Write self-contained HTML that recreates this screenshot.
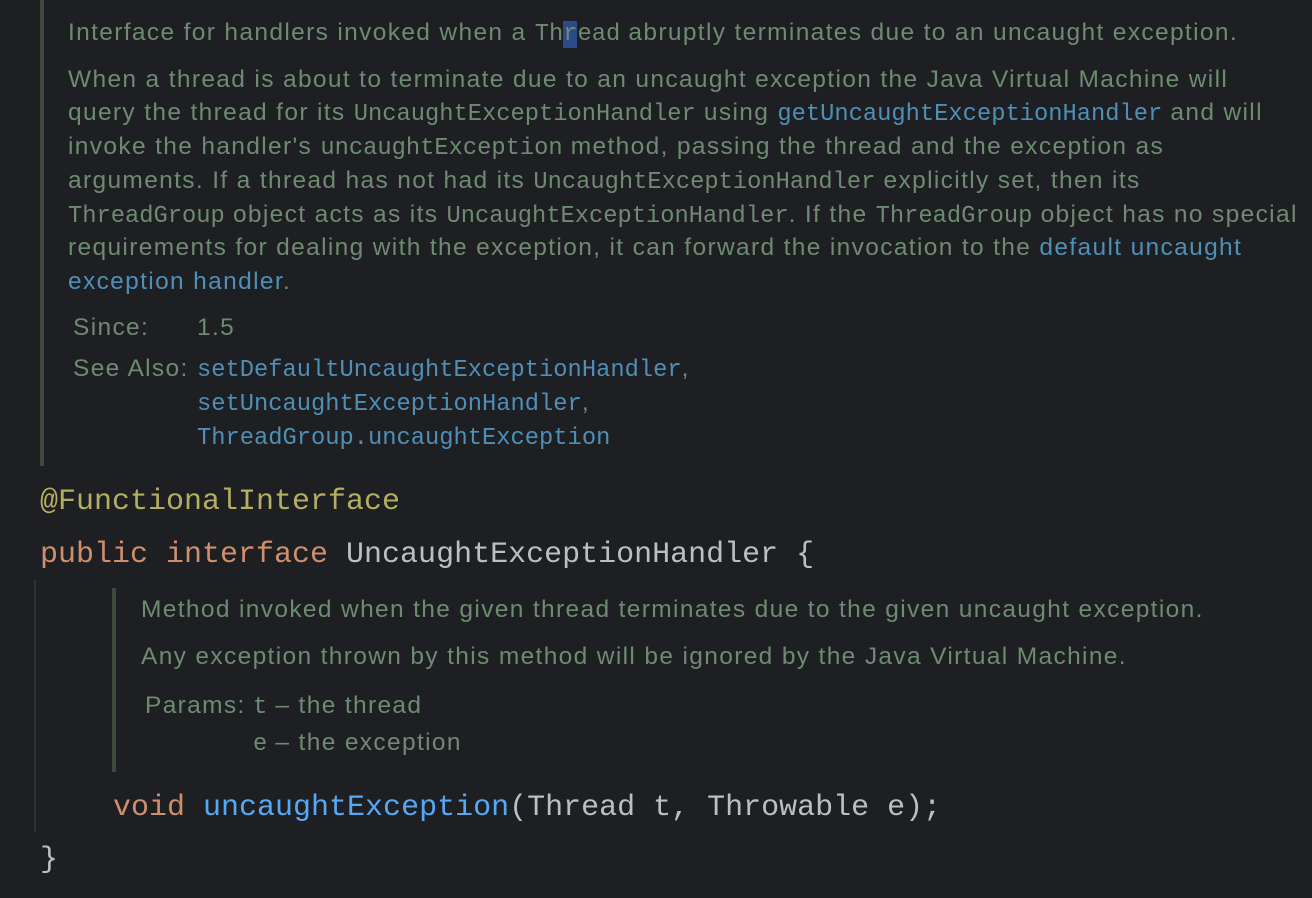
<!DOCTYPE html>
<html><head><meta charset="utf-8"><style>
html,body{margin:0;padding:0;background:#1e1f22;width:1312px;height:898px;overflow:hidden;position:relative}
.d{position:absolute;font-family:"Liberation Sans",sans-serif;font-size:24.5px;letter-spacing:1.35px;color:#6f8a72;line-height:34px;white-space:nowrap}
.m{font-family:"Liberation Mono",monospace;font-size:23.75px;letter-spacing:0}
.l{color:#4f8fb6}
.c{position:absolute;font-family:"Liberation Mono",monospace;font-size:30px;line-height:40px;white-space:nowrap;color:#bcbec4}
.k{color:#cf8e6d}.a{color:#b3ae60}.f{color:#56a8f5}
.bar{position:absolute;background:#3b4a3d;width:4px}
</style></head><body>
<div class="bar" style="left:40px;top:0;height:466px"></div>
<div class="d" style="left:68px;top:16px">Interface for handlers invoked when a <span class="m">Th<span style="background:#2c4a8a">r</span>ead</span> abruptly terminates due to an uncaught exception.</div>
<div class="d" style="left:68px;top:63px">When a thread is about to terminate due to an uncaught exception the Java Virtual Machine will</div>
<div class="d" style="left:68px;top:96px">query the thread for its <span class="m">UncaughtExceptionHandler</span> using <span class="m l">getUncaughtExceptionHandler</span> and will</div>
<div class="d" style="left:68px;top:130px">invoke the handler's <span class="m">uncaughtException</span> method, passing the thread and the exception as</div>
<div class="d" style="left:68px;top:164px">arguments. If a thread has not had its <span class="m">UncaughtExceptionHandler</span> explicitly set, then its</div>
<div class="d" style="left:68px;top:198px"><span class="m">ThreadGroup</span> object acts as its <span class="m">UncaughtExceptionHandler</span>. If the <span class="m">ThreadGroup</span> object has no special</div>
<div class="d" style="left:68px;top:231px">requirements for dealing with the exception, it can forward the invocation to the <span class="l">default uncaught</span></div>
<div class="d" style="left:68px;top:265px"><span class="l">exception handler</span>.</div>
<div class="d" style="left:73px;top:311px">Since:</div>
<div class="d" style="left:197px;top:311px">1.5</div>
<div class="d" style="left:73px;top:352px">See Also:</div>
<div class="d" style="left:197px;top:352px"><span class="m l">setDefaultUncaughtExceptionHandler</span>,</div>
<div class="d" style="left:197px;top:386px"><span class="m l">setUncaughtExceptionHandler</span>,</div>
<div class="d" style="left:197px;top:420px"><span class="m l">ThreadGroup.uncaughtException</span></div>
<div class="c a" style="left:40px;top:482px">@FunctionalInterface</div>
<div class="c" style="left:40px;top:535px"><span class="k">public interface</span> UncaughtExceptionHandler {</div>
<div style="position:absolute;left:34px;top:580px;width:2px;height:252px;background:#313236"></div>
<div class="bar" style="left:112px;top:588px;height:184px"></div>
<div class="d" style="left:141px;top:593px">Method invoked when the given thread terminates due to the given uncaught exception.</div>
<div class="d" style="left:141px;top:640px">Any exception thrown by this method will be ignored by the Java Virtual Machine.</div>
<div class="d" style="left:145px;top:689px">Params:</div>
<div class="d" style="left:253px;top:689px"><span class="m">t</span> – the thread</div>
<div class="d" style="left:253px;top:726px"><span class="m">e</span> – the exception</div>
<div class="c" style="left:113px;top:788px"><span class="k">void</span> <span class="f">uncaughtException</span>(Thread t, Throwable e);</div>
<div class="c" style="left:40px;top:840px">}</div>
</body></html>
